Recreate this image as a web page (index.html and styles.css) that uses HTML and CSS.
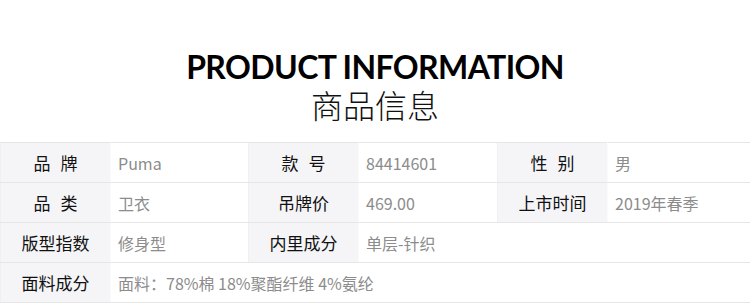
FILE: index.html
```html
<!DOCTYPE html>
<html lang="zh">
<head>
<meta charset="utf-8">
<link rel="stylesheet" href="styles.css">
</head>
<body>
<div class="page">
  <header class="head">
    <div class="en">PRODUCT INFORMATION</div>
    <div class="cn">商品信息</div>
  </header>
  <table class="info">
    <colgroup>
      <col class="c-l1"><col class="c-v1"><col class="c-l2"><col class="c-v2"><col class="c-l3"><col class="c-v3">
    </colgroup>
    <tr>
      <th><span class="sp">品</span>牌</th><td>Puma</td>
      <th><span class="sp">款</span>号</th><td>84414601</td>
      <th><span class="sp">性</span>别</th><td>男</td>
    </tr>
    <tr>
      <th><span class="sp">品</span>类</th><td>卫衣</td>
      <th>吊牌价</th><td>469.00</td>
      <th>上市时间</th><td>2019年春季</td>
    </tr>
    <tr>
      <th>版型指数</th><td>修身型</td>
      <th>内里成分</th><td colspan="3">单层-针织</td>
    </tr>
    <tr>
      <th>面料成分</th><td colspan="5">面料：78%棉 18%聚酯纤维 4%氨纶</td>
    </tr>
  </table>
</div>
</body>
</html>
```
FILE: styles.css
```css
html, body {
  margin: 0;
  padding: 0;
  background: #fff;
}
.page {
  width: 750px;
}
.head {
  padding-top: 51px;
  text-align: center;
  height: 96px;
  box-sizing: border-box;
  display: flex;
  flex-direction: column;
  align-items: center;
}
.en {
  font-family: Lato, "Liberation Sans", sans-serif;
  font-weight: 700;
  font-size: 32px;
  line-height: 32px;
  color: #000;
  letter-spacing: -0.6px;
}
.cn {
  font-family: "Noto Sans CJK SC", sans-serif;
  font-weight: 300;
  font-size: 32px;
  line-height: 36px;
  color: #111;
  margin-top: 3px;
}
.info {
  border-collapse: collapse;
  table-layout: fixed;
  width: 750px;
  margin-top: 46px;
  font-family: "Noto Sans CJK SC", sans-serif;
}
.c-l1 { width: 110px; }
.c-v1 { width: 138px; }
.c-l2 { width: 110px; }
.c-v2 { width: 139px; }
.c-l3 { width: 110px; }
.c-v3 { width: 143px; }
.info th,
.info td {
  height: 39px;
  padding: 0;
  border-top: 1px solid #e6e6e6;
  border-bottom: 1px solid #e6e6e6;
}
.info th {
  background: #f5f5f8;
  color: #111;
  font-weight: 400;
  font-size: 17px;
  text-align: center;
  border-left: 1px solid #f0f0f3;
  border-right: 1px solid #fafafa;
}
.info td {
  color: #8c8c8c;
  font-size: 16px;
  text-align: left;
  padding-left: 7px;
}
.info tr > :last-child {
  border-right: 1px solid #e3e3e3;
}
.sp {
  margin-right: 10px;
}
```
